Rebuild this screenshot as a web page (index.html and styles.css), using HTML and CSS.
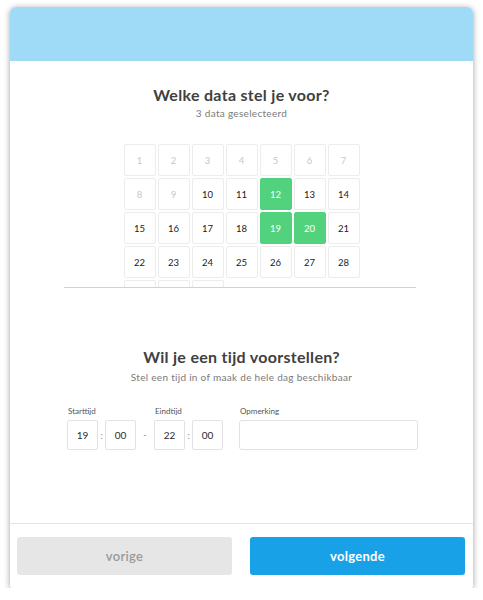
FILE: index.html
```html
<!DOCTYPE html>
<html>
<head>
<meta charset="utf-8">
<link rel="stylesheet" href="styles.css">
</head>
<body>
<div class="card">
  <div class="header"></div>
  <div class="content">
    <h1 class="title">Welke data stel je voor?</h1>
    <p class="sub">3 data geselecteerd</p>
    <div class="cal-wrap">
      <div class="cal">
        <div class="day off">1</div><div class="day off">2</div><div class="day off">3</div><div class="day off">4</div><div class="day off">5</div><div class="day off">6</div><div class="day off">7</div>
        <div class="day off">8</div><div class="day off">9</div><div class="day">10</div><div class="day">11</div><div class="day sel">12</div><div class="day">13</div><div class="day">14</div>
        <div class="day">15</div><div class="day">16</div><div class="day">17</div><div class="day">18</div><div class="day sel">19</div><div class="day sel">20</div><div class="day">21</div>
        <div class="day">22</div><div class="day">23</div><div class="day">24</div><div class="day">25</div><div class="day">26</div><div class="day">27</div><div class="day">28</div>
        <div class="day"></div><div class="day"></div><div class="day"></div>
      </div>
    </div>
    <h2 class="title title2">Wil je een tijd voorstellen?</h2>
    <p class="sub sub2">Stel een tijd in of maak de hele dag beschikbaar</p>
    <div class="times">
      <div class="field">
        <label class="lbl">Starttijd</label>
        <div class="pair"><div class="box">19</div><span class="colon">:</span><div class="box">00</div></div>
      </div>
      <span class="dash">-</span>
      <div class="field">
        <label class="lbl">Eindtijd</label>
        <div class="pair"><div class="box">22</div><span class="colon">:</span><div class="box">00</div></div>
      </div>
      <div class="field note">
        <label class="lbl">Opmerking</label>
        <div class="notebox"></div>
      </div>
    </div>
  </div>
  <div class="footer">
    <button class="btn prev">vorige</button>
    <button class="btn next">volgende</button>
  </div>
</div>
</body>
</html>
```
FILE: styles.css
```css
* { box-sizing: border-box; }
html, body { margin: 0; padding: 0; background: #ffffff; }
body { font-family: "Lato", "Liberation Sans", sans-serif; color: #3d3d3d; }
.card {
  margin: 7px 10px 0 10px;
  height: 581px;
  background: #fff;
  border-radius: 6px 6px 2px 2px;
  box-shadow: 0 1px 6px rgba(0,0,0,0.38);
  display: flex;
  flex-direction: column;
  overflow: hidden;
}
.header { height: 54px; background: #9fdaf7; flex: none; }
.content { flex: 1; display: flex; flex-direction: column; align-items: center; }
.title {
  margin: 25px 0 0 0;
  font-size: 16px;
  line-height: 18px;
  font-weight: 700;
  color: #404040;
  letter-spacing: 0.3px;
}
.sub {
  margin: 3px 0 0 0;
  font-size: 10px;
  line-height: 12px;
  color: #7a7a7a;
  letter-spacing: 0.3px;
}
.cal-wrap {
  margin-top: 25px;
  width: 352px;
  height: 144px;
  border-bottom: 1px solid #d2d2d2;
  overflow: hidden;
  display: flex;
  justify-content: center;
  margin-left: -4px;
}
.cal {
  display: grid;
  grid-template-columns: repeat(7, 32px);
  grid-auto-rows: 32px;
  gap: 2px;
  margin-left: 4px;
}
.day {
  border: 1px solid #ececec;
  border-radius: 2px;
  display: flex;
  align-items: center;
  justify-content: center;
  font-size: 9.5px;
  color: #1a1a1a;
  background: #fff;
}
.day.off { color: #c8c8c8; }
.day.sel { background: #53d27d; border-color: #53d27d; color: #fff; }
.title2 { margin-top: 60px; }
.sub2 { margin-top: 5px; }
.times {
  margin-top: 23px;
  width: 352px;
  display: flex;
  align-items: flex-end;
  margin-left: 3px;
}
.field { display: flex; flex-direction: column; }
.lbl { font-size: 8px; line-height: 10px; color: #555; margin-bottom: 4px; padding-left: 1px; }
.pair { display: flex; align-items: center; }
.box {
  width: 31px;
  height: 30px;
  border: 1px solid #e2e2e2;
  border-radius: 2px;
  display: flex;
  align-items: center;
  justify-content: center;
  font-size: 10px;
  color: #2a2a2a;
}
.colon { width: 7px; text-align: center; font-size: 9px; color: #888; }
.dash { flex: none; width: 18px; height: 30px; line-height: 30px; text-align: center; font-size: 9px; color: #888; }
.note { margin-left: 16px; }
.notebox { width: 179px; height: 30px; border: 1px solid #e2e2e2; border-radius: 3px; }
.footer {
  flex: none;
  border-top: 1px solid #e4e4e4;
  display: flex;
  gap: 18px;
  padding: 13px 8px 13px 7px;
}
.btn {
  flex: 1;
  height: 38px;
  border: none;
  border-radius: 3px;
  font-family: "Lato", "Liberation Sans", sans-serif;
  font-size: 13px;
  letter-spacing: 0.3px;
}
.prev { background: #e6e6e6; color: #9a9a9a; font-weight: 600; }
.next { background: #19a1e7; color: #fff; font-weight: 700; }
```
